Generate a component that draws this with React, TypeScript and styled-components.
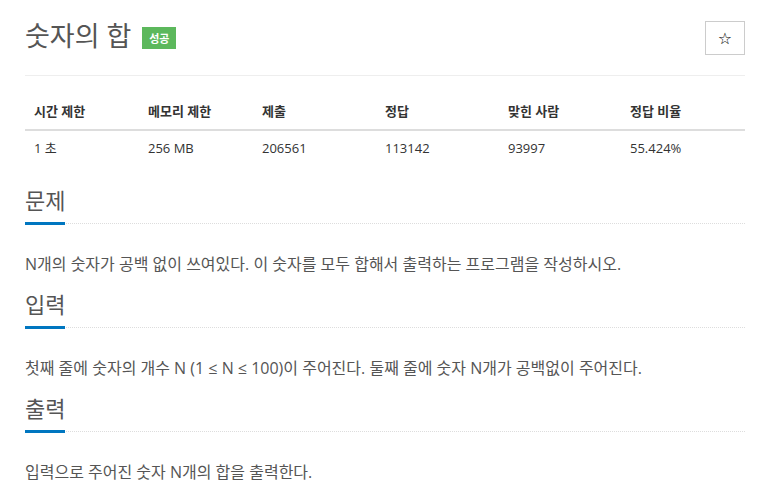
import styled, { createGlobalStyle } from "styled-components";

const GlobalStyle = createGlobalStyle`
  html, body {
    margin: 0;
    padding: 0;
    background: #fff;
  }
  body {
    font-family: "Open Sans", "Noto Sans CJK KR", sans-serif;
    color: #555;
  }
`;

const Page = styled.div`
  width: 720px;
  padding: 16px 0 0 25px;
`;

const TitleBar = styled.div`
  display: flex;
  align-items: center;
  justify-content: space-between;
  padding-bottom: 19px;
  border-bottom: 1px solid #eee;
`;

const TitleGroup = styled.div`
  display: flex;
  align-items: center;
  gap: 11px;
`;

const Title = styled.h1`
  margin: 0;
  font-size: 27px;
  font-weight: 400;
  color: #555;
  line-height: 40px;
`;

const Badge = styled.span`
  display: inline-flex;
  align-items: center;
  justify-content: center;
  width: 34px;
  height: 22px;
  margin-top: 4px;
  background: #5cb85c;
  color: #fff;
  font-size: 11px;
  font-weight: 700;
`;

const StarButton = styled.button`
  width: 40px;
  height: 34px;
  margin-top: 4px;
  border: 1px solid #ccc;
  background: #fff;
  color: #000;
  font-size: 16px;
  padding: 0;
  display: flex;
  align-items: center;
  justify-content: center;
  font-family: "DejaVu Sans", sans-serif;
`;

const Table = styled.div`
  margin-top: 17px;
  display: grid;
  grid-template-columns: 114px 114px 123px 123px 122px 1fr;
  font-size: 13px;
`;

const HeadCell = styled.div`
  padding: 8px 9px;
  line-height: 20px;
  font-weight: 700;
  color: #333;
  border-bottom: 2px solid #ddd;
`;

const Cell = styled.div`
  padding: 7px 9px 8px;
  line-height: 20px;
  color: #333;
`;

const Section = styled.section`
  margin-top: 9px;

  &:first-of-type {
    margin-top: 16px;
  }
`;

const Headline = styled.div`
  border-bottom: 1px dotted #ddd;
`;

const HeadlineText = styled.h2`
  display: inline-block;
  margin: 0 0 -2px;
  padding-bottom: 4px;
  font-size: 22px;
  font-weight: 400;
  line-height: 36px;
  color: #555;
  border-bottom: 3px solid #0076c0;
`;

const Text = styled.p`
  margin: 27px 0 0;
  font-size: 16px;
  line-height: 26px;
  color: #555;
`;

const limits = [
  ["시간 제한", "1 초"],
  ["메모리 제한", "256 MB"],
  ["제출", "206561"],
  ["정답", "113142"],
  ["맞힌 사람", "93997"],
  ["정답 비율", "55.424%"],
];

const sections = [
  {
    title: "문제",
    body: "N개의 숫자가 공백 없이 쓰여있다. 이 숫자를 모두 합해서 출력하는 프로그램을 작성하시오.",
  },
  {
    title: "입력",
    body: "첫째 줄에 숫자의 개수 N (1 ≤ N ≤ 100)이 주어진다. 둘째 줄에 숫자 N개가 공백없이 주어진다.",
  },
  {
    title: "출력",
    body: "입력으로 주어진 숫자 N개의 합을 출력한다.",
  },
];

export default function App() {
  return (
    <>
      <GlobalStyle />
      <Page>
        <TitleBar>
          <TitleGroup>
            <Title>숫자의 합</Title>
            <Badge>성공</Badge>
          </TitleGroup>
          <StarButton aria-label="즐겨찾기">☆</StarButton>
        </TitleBar>
        <Table>
          {limits.map(([h]) => (
            <HeadCell key={h}>{h}</HeadCell>
          ))}
          {limits.map(([h, v]) => (
            <Cell key={h}>{v}</Cell>
          ))}
        </Table>
        {sections.map((s) => (
          <Section key={s.title}>
            <Headline>
              <HeadlineText>{s.title}</HeadlineText>
            </Headline>
            <Text>{s.body}</Text>
          </Section>
        ))}
      </Page>
    </>
  );
}
